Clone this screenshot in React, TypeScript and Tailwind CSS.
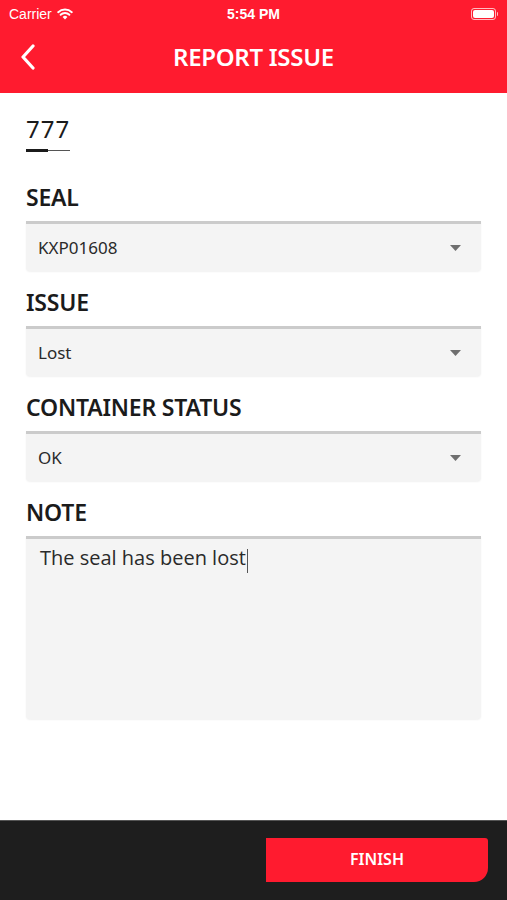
import React from 'react';

const Caret = () => (
  <svg width="11" height="6" viewBox="0 0 11 6" className="shrink-0">
    <path d="M0 0 H11 L5.5 6 Z" fill="#6f6f6f" />
  </svg>
);

const SelectField = ({ label, value }: { label: string; value: string }) => (
  <div>
    <div className="mt-[17px] mb-[10px] text-[23px] leading-[28px] font-semibold text-[#1b1b1b] tracking-[-0.2px]">{label}</div>
    <div className="h-[50px] bg-[#f4f4f4] border-t-[3px] border-[#cbcbcb] rounded-b-[4px] shadow-[0_1px_2px_rgba(0,0,0,0.06)] flex items-center justify-between pl-[12px] pr-[20px]">
      <span className="text-[17px] text-[#2a2a2a]">{value}</span>
      <Caret />
    </div>
  </div>
);

const App = () => {
  return (
    <div className="h-[900px] w-full flex flex-col bg-white font-['Noto_Sans',sans-serif]">
      {/* status bar + nav */}
      <div className="bg-[#ff1b2f] text-white">
        <div className="h-[28px] flex items-center justify-between px-[9px] relative font-['Liberation_Sans',sans-serif]">
          <div className="flex items-center gap-[5px] text-[14px]">
            <span>Carrier</span>
            <svg width="16" height="12" viewBox="0 0 16 12">
              <path d="M8 11.5 L5.6 8.9 A3.4 3.4 0 0 1 10.4 8.9 Z" fill="white" />
              <path d="M3.6 6.8 A6.3 6.3 0 0 1 12.4 6.8" stroke="white" strokeWidth="1.9" fill="none" strokeLinecap="round" />
              <path d="M1.2 4.2 A9.8 9.8 0 0 1 14.8 4.2" stroke="white" strokeWidth="1.9" fill="none" strokeLinecap="round" />
            </svg>
          </div>
          <span className="absolute left-1/2 -translate-x-1/2 text-[14px] font-semibold">5:54 PM</span>
          <div className="flex items-center">
            <div className="w-[25px] h-[12px] rounded-[3px] border border-white/70 p-[1px]">
              <div className="w-full h-full bg-white rounded-[2px]" />
            </div>
            <div className="w-[1.5px] h-[4px] bg-white/70 ml-[1px] rounded-r" />
          </div>
        </div>
        <div className="h-[65px] pb-[8px] flex items-center relative">
          <svg width="16" height="26" viewBox="0 0 16 26" className="ml-[20px]">
            <path d="M13 2 L3 13 L13 24" stroke="white" strokeWidth="3.2" fill="none" strokeLinecap="round" strokeLinejoin="round" />
          </svg>
          <span className="absolute left-1/2 top-[14px] -translate-x-1/2 text-[24px] leading-[30px] font-semibold tracking-[-0.3px]">REPORT ISSUE</span>
        </div>
      </div>

      {/* form */}
      <div className="flex-1 px-[26px] pt-[21px] flex flex-col">
        <div className="self-start inline-flex flex-col">
          <span className="text-[24px] leading-[30px] text-[#1b1b1b] tracking-[1px]">777</span>
          <div className="mt-[5px] flex items-center h-[3px]">
            <div className="w-[22px] h-[3px] bg-[#1b1b1b]" />
            <div className="flex-1 h-px bg-[#555]" />
          </div>
        </div>

        <div className="mt-[14px] flex flex-col">
          <SelectField label="SEAL" value="KXP01608" />
          <SelectField label="ISSUE" value="Lost" />
          <SelectField label="CONTAINER STATUS" value="OK" />
          <div className="mt-[17px] mb-[10px] text-[23px] leading-[28px] font-semibold text-[#1b1b1b] tracking-[-0.2px]">NOTE</div>
          <div className="h-[183px] bg-[#f4f4f4] border-t-[3px] border-[#cbcbcb] rounded-b-[4px] shadow-[0_1px_2px_rgba(0,0,0,0.06)] px-[14px] pt-[4px]">
            <span className="text-[20px] text-[#2a2a2a] font-['Open_Sans',sans-serif]">The seal has been lost</span>
            <span className="inline-block w-[1.5px] h-[24px] bg-[#555] align-middle ml-px" />
          </div>
        </div>
      </div>

      {/* bottom bar */}
      <div className="h-[80px] bg-[#1e1e1e] border-t border-[#555] flex items-start justify-end pr-[19px] pt-[17px]">
        <button className="w-[222px] h-[44px] pb-[3px] bg-[#ff1b2f] text-white text-[16px] font-semibold rounded-tr-[3px] rounded-br-[14px]">
          FINISH
        </button>
      </div>
    </div>
  );
};

export default App;
